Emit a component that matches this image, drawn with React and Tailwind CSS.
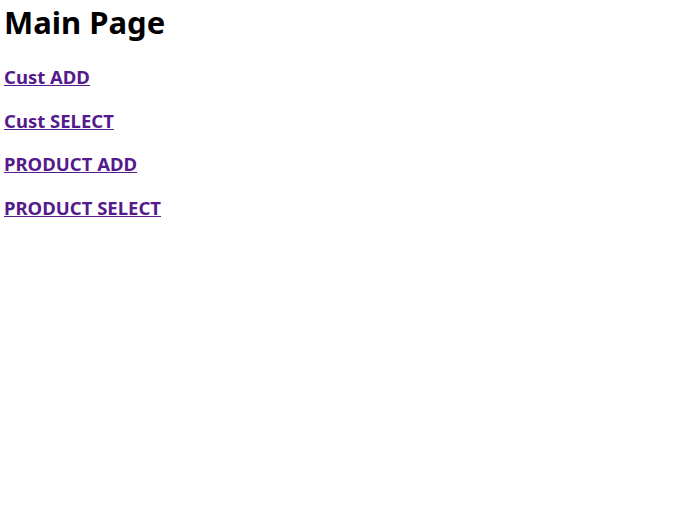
const LINKS = ["Cust ADD", "Cust SELECT", "PRODUCT ADD", "PRODUCT SELECT"];

export default function App() {
  return (
    <div className="min-h-screen bg-white px-1 pt-0 font-['Noto_Sans','Noto_Sans_CJK_KR',sans-serif]">
      <h1 className="text-[31px] font-bold leading-[44px] text-black">Main Page</h1>
      <div className="mt-[20px] flex flex-col gap-[17.6px]">
        {LINKS.map(label => (
          <h3 key={label} className="text-[18.5px] font-bold leading-[26px]">
            <a href="#" className="text-[#551a8b] underline">{label}</a>
          </h3>
        ))}
      </div>
    </div>
  );
}
